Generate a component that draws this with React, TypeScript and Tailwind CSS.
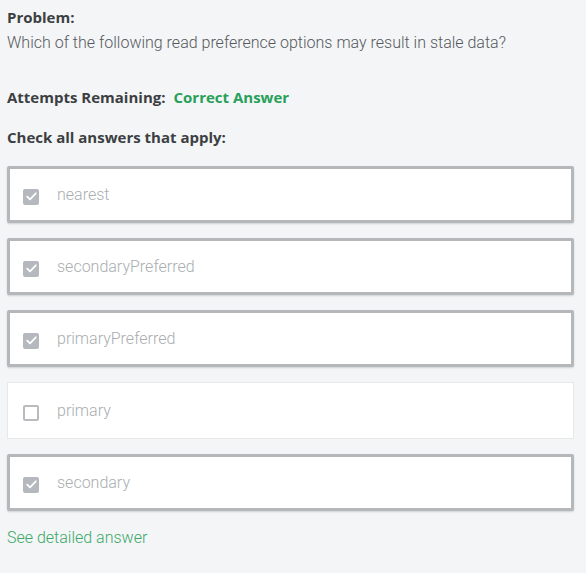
import React from 'react'

const options = [
  { label: 'nearest', checked: true },
  { label: 'secondaryPreferred', checked: true },
  { label: 'primaryPreferred', checked: true },
  { label: 'primary', checked: false },
  { label: 'secondary', checked: true },
]

function Box({ checked }: { checked: boolean }) {
  if (!checked) {
    return <div className="w-[16px] h-[16px] rounded-[2px] border-2 border-[#b9bcbf] bg-white shrink-0" />
  }
  return (
    <div className="w-[16px] h-[16px] rounded-[2px] bg-[#b5b9bd] shrink-0 flex items-center justify-center">
      <svg width="11" height="9" viewBox="0 0 11 9" fill="none">
        <path d="M1.2 4.6 L4 7.3 L9.8 1.3" stroke="white" strokeWidth="1.8" strokeLinecap="round" strokeLinejoin="round" />
      </svg>
    </div>
  )
}

export default function App() {
  return (
    <div className="w-[586px] h-[573px] bg-[#f4f5f7] font-['Open_Sans',sans-serif] overflow-hidden">
      <div className="pl-[7px] pt-[8px]">
        <div className="text-[15px] font-bold text-[#3c3f42] leading-[18px]">Problem:</div>
        <div className="font-['Roboto',sans-serif] text-[16px] font-light text-[#55595d] leading-[18px] mt-[8px]">
          Which of the following read preference options may result in stale data?
        </div>

        <div className="flex items-center gap-[8px] mt-[36px] leading-[18px]">
          <span className="text-[15px] font-bold text-[#3c3f42]">Attempts Remaining:</span>
          <span className="text-[15px] font-bold text-[#27a05a]">Correct Answer</span>
        </div>

        <div className="text-[15px] font-bold text-[#3c3f42] leading-[18px] mt-[22px]">
          Check all answers that apply:
        </div>

        <div className="flex flex-col gap-[15px] mt-[20px] w-[567px]">
          {options.map(o => (
            <div
              key={o.label}
              className={`h-[57px] bg-white flex items-center gap-[18px] ${ o.checked ? 'border-[3px] border-[#b4b8bb] rounded-[2px] shadow-[0_1px_2px_rgba(0,0,0,0.15)] pl-[13px]' : 'border border-[#e6e8ea] pl-[15px]' }`}
            >
              <div className="mt-[4px]">
                <Box checked={o.checked} />
              </div>
              <span className="font-['Roboto',sans-serif] text-[16px] font-light text-[#a9adb0]">{o.label}</span>
            </div>
          ))}
        </div>

        <div className="mt-[18px] font-['Roboto',sans-serif] text-[16px] font-light text-[#3aa867] leading-[18px]">See detailed answer</div>
      </div>
    </div>
  )
}
